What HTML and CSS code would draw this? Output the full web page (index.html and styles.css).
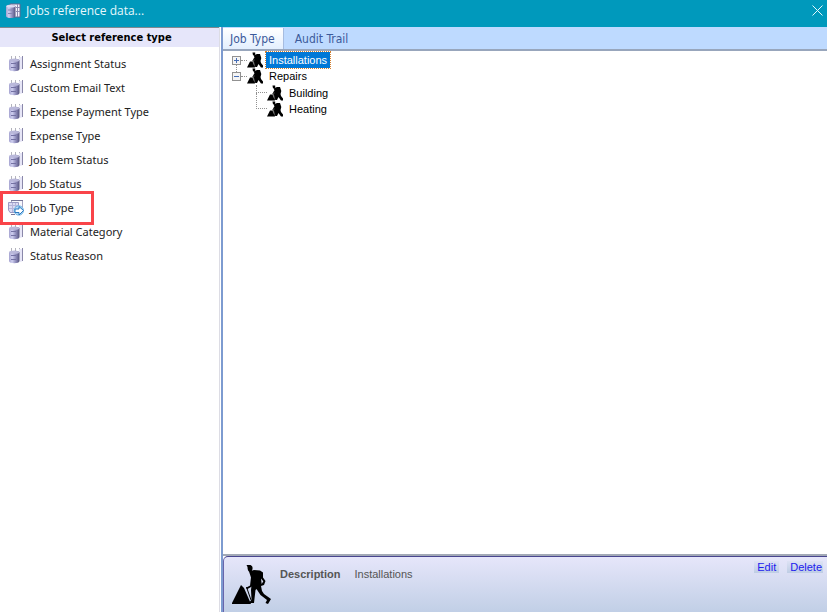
FILE: index.html
```html
<!DOCTYPE html>
<html lang="en">
<head>
<meta charset="utf-8">
<title>Jobs reference data...</title>
<link rel="stylesheet" href="styles.css">
</head>
<body>
<svg class="defs" aria-hidden="true">
  <defs>
    <linearGradient id="metal" x1="0" x2="1" y1="0" y2="0">
      <stop offset="0" stop-color="#a5a3d0"/><stop offset=".3" stop-color="#cfcff0"/><stop offset=".65" stop-color="#8f8dbb"/><stop offset="1" stop-color="#55537f"/>
    </linearGradient>
    <symbol id="data" viewBox="0 0 16 16">
      <path d="M3.500 0v4M7.500 0v4M11.500 0v2" stroke="#b3b3bd"/>
      <path d="M11 1h4v12l-3 1z" fill="#e7e6f7"/>
      <path d="M14.500 0v13" stroke="#8a88aa"/>
      <path d="M1 4.500C1 2 11.500 2 11.500 4.500v8.500c0 3-10.500 3-10.500 0z" fill="url(#metal)"/>
      <ellipse cx="6.200" cy="4.300" rx="5" ry="1.500" fill="#b9b8da"/>
      <path d="M3 7.500h5M3 11.500h5" stroke="#7472a3"/>
    </symbol>
    <symbol id="data-table" viewBox="0 0 16 16">
      <path d="M5 1h10v13H5z" fill="#f2f1fb" stroke="#66658e"/>
      <path d="M11 4.500h4M11 8.500h4M12.500 1v13" stroke="#8a88ae"/>
      <path d="M1 3.500C1 1 10.500 1 10.500 3.500v9.500c0 2.700-9.500 2.700-9.500 0z" fill="url(#metal)"/>
      <ellipse cx="5.800" cy="3.300" rx="4.500" ry="1.300" fill="#dddcf2"/>
      <path d="M3 7h5M3 10.500h5" stroke="#8583b2"/>
    </symbol>
    <symbol id="data-go" viewBox="0 0 16 16">
      <path d="M3.500 .5h11v10h-11z" fill="#f8f8fd" stroke="#a5a4c2"/>
      <path d="M3 .5h12" stroke="#777698"/>
      <path d="M.5 2.500h10v10H2L.5 10z" fill="#dcdcf3" stroke="#9b9ac4"/>
      <path d="M1 5.500h9M1 8.500h9M4.500 3v9M7.500 3v9" stroke="#b6b5da"/>
      <path d="M3 14.500h4" stroke="#777698"/>
      <circle cx="10.800" cy="10.500" r="4.700" fill="#b9dcf7" stroke="#72b5e5"/>
      <path d="M7 9h4V6.500l4.500 4-4.500 4.500v-2.500H7z" fill="#fff" stroke="#2b78bf"/>
    </symbol>
    <symbol id="worker" viewBox="0 0 40 40">
      <path d="M14.500 0h4q2.500 1 2 4l-1 3h-2q-2-1-2-5z"/>
      <path d="M17 6.500 22 5l6 .5 3 2v5l2.500 3.500-1.500 4-3 1 1 5 2 3 7 5-3 5-2.500-1 1.500-3-6.500-5-4-6-1 1-1.500 13H17l2.500-3.500L19 25l1-9-1.500-5z"/>
      <path d="m29 13.500 2.300 2.700-1.600 2.800z" fill="#dcdff2"/>
      <path d="m20 12-1 9-4.500 2.500" fill="none" stroke="#000" stroke-width="2"/>
      <path d="m14.500 22 4.500 13" fill="none" stroke="#000"/>
      <path d="M9 20-.5 39H19l-7-16z"/>
    </symbol>
    <symbol id="worker-small" viewBox="0 0 16 16">
      <path d="M5.500 .5h2.700v2.800H6z"/>
      <path d="M6.500 3.500 10 2h3l1.300 4-.8 3 .5 2 2 2.500v2h-2L11.500 12 10 15H7V9l1-3z"/>
      <path d="M8 5.500 6 9.500" fill="none" stroke="#000" stroke-width="1.500"/>
      <path d="m6 8 2 7" fill="none" stroke="#555"/>
      <path d="M3 9.500h2.500L8 15.500H0z"/>
    </symbol>
  </defs>
</svg>
<div class="window">
  <header class="titlebar">
    <svg class="icon"><use href="#data-table"/></svg>
    <h1>Jobs reference data...</h1>
    <button class="close" aria-label="Close"><svg viewBox="0 0 11 11"><path d="m.5.5 10 10m0-10-10 10"/></svg></button>
  </header>
  <div class="body">
    <nav class="sidebar">
      <h2>Select reference type</h2>
      <ul class="types">
        <li><a href="#"><svg class="icon"><use href="#data"/></svg>Assignment Status</a></li>
        <li><a href="#"><svg class="icon"><use href="#data"/></svg>Custom Email Text</a></li>
        <li><a href="#"><svg class="icon"><use href="#data"/></svg>Expense Payment Type</a></li>
        <li><a href="#"><svg class="icon"><use href="#data"/></svg>Expense Type</a></li>
        <li><a href="#"><svg class="icon"><use href="#data"/></svg>Job Item Status</a></li>
        <li><a href="#"><svg class="icon"><use href="#data"/></svg>Job Status</a></li>
        <li class="marked"><a href="#" aria-current="page"><svg class="icon"><use href="#data-go"/></svg>Job Type</a></li>
        <li><a href="#"><svg class="icon"><use href="#data"/></svg>Material Category</a></li>
        <li><a href="#"><svg class="icon"><use href="#data"/></svg>Status Reason</a></li>
      </ul>
    </nav>
    <main class="content">
      <div class="tabs" role="tablist">
        <button class="tab active" role="tab" aria-selected="true">Job Type</button>
        <button class="tab" role="tab" aria-selected="false">Audit Trail</button>
      </div>
      <div class="panel">
        <ul class="tree">
          <li>
            <div class="node"><button class="toggle closed" aria-label="Expand"></button><span class="dots"></span><svg class="glyph"><use href="#worker-small"/></svg><span class="label selected">Installations</span></div>
          </li>
          <li>
            <div class="node"><button class="toggle" aria-label="Collapse"></button><span class="dots"></span><svg class="glyph"><use href="#worker-small"/></svg><span class="label">Repairs</span></div>
            <ul class="branch">
              <li class="node"><span class="elbow"></span><svg class="glyph"><use href="#worker-small"/></svg><span class="label">Building</span></li>
              <li class="node"><span class="elbow"></span><svg class="glyph"><use href="#worker-small"/></svg><span class="label">Heating</span></li>
            </ul>
          </li>
        </ul>
      </div>
      <footer class="details">
        <svg class="picture"><use href="#worker"/></svg>
        <dl><dt>Description</dt><dd>Installations</dd></dl>
        <div class="actions"><button>Edit</button><button>Delete</button></div>
      </footer>
    </main>
  </div>
</div>
</body>
</html>
```

FILE: styles.css
```css
*, *::before, *::after { box-sizing: border-box; }
body, h1, h2, ul, dl, dd { margin: 0; padding: 0; }
ul { list-style: none; }
button { border: 0; padding: 0; background: none; font: inherit; color: inherit; }
svg { display: block; flex: none; }
.defs { position: absolute; width: 0; height: 0; }
body { font: 11px/16px "Noto Sans", sans-serif; color: #222; background: #fff; }
.window { display: flex; flex-direction: column; min-height: 100vh; }
.icon { width: 16px; height: 16px; }

.titlebar { display: flex; align-items: center; height: 27px; padding: 0 4px 6px 5px; background: #0099bc; color: #e6f8fc; }
.titlebar h1 { flex: 1; margin-left: 5px; font: 12px/16px "Open Sans", sans-serif; }
.close svg { width: 11px; height: 11px; fill: none; stroke: #e6f8fc; stroke-width: 1; }

.body { display: flex; flex: 1; }
.sidebar { width: 220px; border-right: 1px solid #dcdce4; }
.sidebar h2 { height: 20px; padding-left: 4px; border-top: 1px solid #808890; background: #e6e6fa; color: #000; font: bold 11px/20px "DejaVu Sans Condensed", "DejaVu Sans", sans-serif; text-align: center; }
.types { padding-top: 5px; }
.types a { display: flex; align-items: center; gap: 6px; height: 24px; padding-left: 8px; color: inherit; text-decoration: none; }
.marked { position: relative; }
.marked::after { content: ""; position: absolute; left: 0; top: -5px; width: 94px; height: 34px; border: 3px solid #f94449; }

.content { display: flex; flex: 1; flex-direction: column; margin-left: 1px; border-left: 2px solid #7d9bd0; font: 11px/16px "Liberation Sans", sans-serif; color: #000; }
.tabs { display: flex; height: 24px; padding-top: 1px; border-bottom: 2px solid #98a6bc; background: #bedaff; }
.tab { padding: 0 11px; color: #3c5a9a; font: 12px/16px "DejaVu Sans Condensed", "DejaVu Sans", sans-serif; }
.active { padding: 0 8px 0 7px; background: linear-gradient(#fff, #e3effe); border-right: 1px solid #a6bce0; }

.panel { flex: 1; padding: 1px 9px; border-bottom: 2px solid #a2a9b6; }
.node { display: flex; align-items: center; height: 16px; }
.toggle { position: relative; width: 9px; height: 9px; border: 1px solid #919191; background: linear-gradient(#456db5, #456db5) center / 5px 1px no-repeat, #f4f4f4; }
.closed { background: linear-gradient(#456db5, #456db5) center / 5px 1px no-repeat, linear-gradient(#456db5, #456db5) center / 1px 5px no-repeat, #f4f4f4; }
.closed::after { content: ""; position: absolute; left: 3px; top: 8px; height: 7px; border-left: 1px dotted #919191; }
.dots { width: 6px; border-top: 1px dotted #919191; }
.glyph { width: 16px; height: 16px; margin-right: 3px; }
.label { padding: 0 3px; line-height: 16px; }
.selected { outline: 1px dotted #d48030; background: #0078d7; color: #fff; }
.branch { padding: 1px 0 0 24px; }
.elbow { align-self: stretch; width: 11px; height: 8px; border-left: 1px dotted #919191; border-bottom: 1px dotted #919191; }
.branch .node + .node .elbow { height: 16px; margin-top: -8px; }

.details { display: flex; align-items: flex-start; height: 56px; padding: 0 4px 0 8px; border-top: 1px solid #48458f; border-left: 1px solid #6865ac; border-top-left-radius: 5px; background: linear-gradient(#e6e6fa, #c1cfe6); }
.picture { width: 40px; height: 40px; margin-top: 8px; }
.details dl { display: flex; flex: 1; gap: 14px; margin: 9px 0 0 8px; color: #555; }
.details dt { font-weight: bold; }
.actions { display: flex; gap: 8px; margin-top: 4px; color: #2020ee; line-height: 12px; }
.actions button { padding: 0 3px; background: linear-gradient(#dde2f4, #becde4); }
.actions button:last-child { padding-right: 1px; }
```
